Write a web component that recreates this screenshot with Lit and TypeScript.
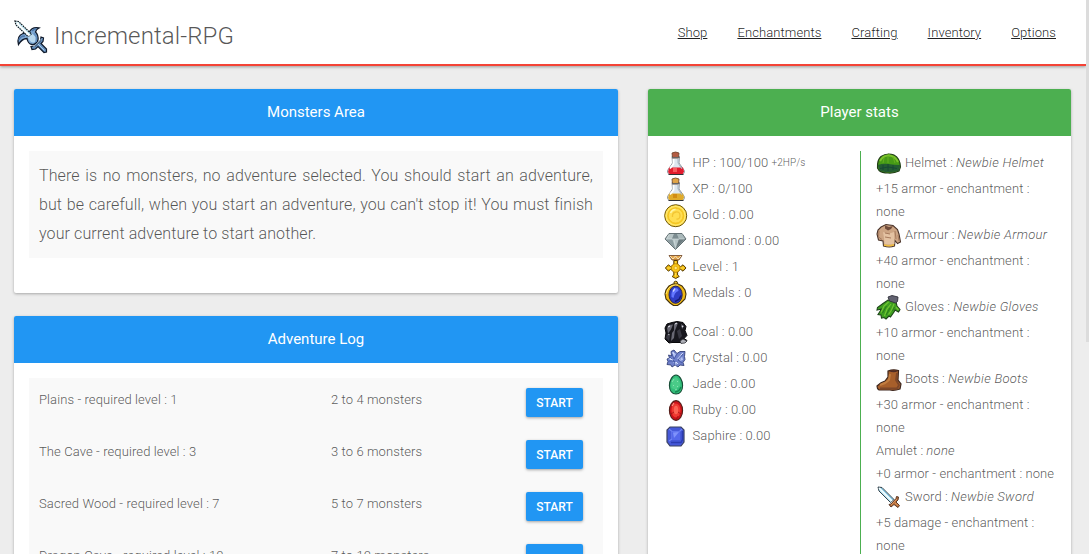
import { LitElement, html, svg, css } from "lit";
import { customElement } from "lit/decorators.js";

const frame = (body: unknown) => html`<svg class="icon" viewBox="0 0 26 26" aria-hidden="true">${body}</svg>`;

const potion = (liquid: string, light: string, cap: string) => svg`
  <path d="M8 6.5 8.500 13 3.500 20.500Q3 24.500 7 24.500h10q4 0 3.300-4L15 13l.5-6.500z" fill="#dde7ef" stroke="#7b848d" stroke-width=".8"/>
  <path d="M5 17.500h14l1 4q-.5 2.700-3 2.700H7q-2.700 0-2.800-2.700z" fill="${liquid}"/>
  <path d="M9 18h4v4H9z" fill="${light}"/>
  <path d="M9.500 9v5L6 18.500" stroke="#fff" stroke-width="1.800" fill="none"/>
  <path d="M14 9v4l4 6" stroke="#a8b5c2" fill="none"/>
  <path d="M8 3q3.500-2 7 0l-.5 5H8.500z" fill="${cap}" stroke="#6b4028" stroke-width=".8"/>
  <path d="M8 7.500h7.500" stroke="#666" stroke-width="1.100"/>
  <path d="M4.500 24.500h15" stroke="#303338"/>`;

const icons: Record<string, unknown> = {
  hp: frame(potion("#e31c2e", "#f75a5e", "#b45c43")),
  xp: frame(potion("#e0ab2b", "#d18c13", "#e0a548")),
  gold: frame(svg`
    <circle cx="11.700" cy="13.700" r="11" fill="#f6cd22" stroke="#6b5510"/>
    <circle cx="11.700" cy="13.700" r="9.500" fill="none" stroke="#ffe66e" stroke-width="1.600"/>
    <circle cx="11.700" cy="13.700" r="7.400" fill="#ffdf52" stroke="#f0bd25" stroke-width=".8"/>
    <path d="M8.500 15q-.5-4.500 3.500-5t4 3.500-3.500 3.500" stroke="#f3c534" stroke-width="1.300" fill="none"/>
    <path d="M6.500 11q2-4 5-3.500" stroke="#fff6a5" stroke-width="1.500" fill="none"/>`),
  diamond: frame(svg`
    <path d="M5 5.500h13l4 5.500L11.500 21.500 1 11z" fill="#94a3a6" stroke="#59676a" stroke-width=".9"/>
    <path d="m5 6-3 5h6l2-5z" fill="#b7c4c5"/><path d="M10 6 8 11h7l-2-5z" fill="#7c8c90"/>
    <path d="m13 6 2 5h6l-3-5z" fill="#a9b8ba"/><path d="m8 11 3.500 10L15 11z" fill="#b4c2c4"/>
    <path d="m2 11 9 9-3-9z" fill="#8d9da1"/><path d="m15 11-3 9 9-9z" fill="#6c7b7f"/>
    <path d="m5 7-2 3.500M10 12l1.500 7M2 11h18" stroke="#dce6e5" stroke-width=".6" fill="none"/>`),
  level: frame(svg`
    <path d="M5 1.500h13l-3 4.500H8z" fill="#e5a54a" stroke="#6c4225" stroke-width=".8"/>
    <path d="m6 2 3 3 2.500-3L14 5l3-3" fill="none" stroke="#f7e3bd" stroke-width="1"/>
    <path d="M9.800 6.500h3.800v3.700l3 2.500 2.400-1.900 3 3.200-3 3.200-2.400-1.900-3 2.700v3l1.700 1.500-3.600 2-3.600-2 1.700-1.500v-3l-3-2.700-2.400 1.900-3-3.200 3-3.200 2.400 1.900 3-2.500z" fill="#efb90b" stroke="#553a03" stroke-width="1"/>
    <path d="M11.700 7.500v15M3 14h17" stroke="#ffe05a" stroke-width="1"/>
    <circle cx="11.700" cy="14" r="4.300" fill="#f8c719" stroke="#bd870b"/>
    <circle cx="11.700" cy="14" r="1.700" fill="#ffed83" stroke="#de9b0a" stroke-width=".7"/>`),
  medals: frame(svg`
    <circle cx="11.700" cy="3" r="1.800" fill="#edbf34" stroke="#4b3705"/>
    <path d="M5 6 9 4h5l4 2 3 4 1 4-1 5-4 4-3.500 2.500h-4L6 23l-4-4-1-5 1-4z" fill="#eeb814" stroke="#443109" stroke-width="1.100"/>
    <path d="m2 14 2-5 3-3 4-1h3" stroke="#ffe66b" fill="none"/>
    <ellipse cx="11.600" cy="14.700" rx="6.600" ry="8.600" fill="#2f3dc4" stroke="#2a2553"/>
    <path d="M7.500 17q-1-6 4-9 3 0 3 3-4 1-5 7z" fill="#6377ff"/><path d="m9 11.500 2-3" stroke="#cbd3ff" stroke-width="1.400"/>
    <path d="m11 21.500 4-2 2-4" stroke="#151a72" stroke-width="1.500" fill="none"/>`),
  coal: frame(svg`
    <path d="M3 5 8 3.500 13 2.500l6 1 3 4-1 4 2 5-3 3 3 2-2 2H8l-3 .5-4-4 1-6-1-5z" fill="#17171d" stroke="#08080b"/>
    <path d="m3 9 2-3 4-.5-2 5-3 4zM10 5l4-1-2 5-2 5zM17 5l3 2-2 3zM8 14l3-4-1 9-3 3z" fill="#686873"/>
    <path d="m4 8 2-1M11 5l2-1M5 15l-1 4M15 13l1 5M18 7l1 1" stroke="#d9dae2" stroke-width="1.100"/>
    <path d="m13 12 3-2 2 7-3 3zM3 15l3 2-1 5-3-3z" fill="#383842"/>
    <path d="m16 22 3-2 4 2-2 2-4 .5z" fill="#aeb0b8" stroke="#24242a" stroke-width=".7"/>`),
  crystal: frame(svg`
    <path d="m7 6.500 3-1.500 3 3.500 3-2 5 0-.5 5 .5 3-2 3 1 3-4-.5-2 2-3-2-3 2-1-2-4-.5 1-3-1-2.500 2.500-1-1-3 3 1z" fill="#6f80ca" stroke="#34427a" stroke-width=".9"/>
    <path d="m8 7 2 6 2-4zM18 8l-5 6 3 1zM4 14l6 2-3-3.500zM18 11l-2 5 3-1zM9 17l3 4 1-4z" fill="#b6c4f3"/>
    <path d="m8 9 2 5 3-5m6 0-5 6 4 3M5 16h5l1 4M6 12l5 5" stroke="#4659a5" stroke-width=".9" fill="none"/>
    <path d="m9 7 1 2m9-1-2 2M6 14l3 1m3 2 2 2" stroke="#e5edff" stroke-width=".8"/>`),
  jade: frame(svg`
    <path d="M12 4c3.500 0 6.600 5.500 6.600 10.500S16 23 12 23s-6.600-3.500-6.600-8.500S8.500 4 12 4z" fill="#31bd79" stroke="#174b35" stroke-width="1.100"/>
    <path d="M7.500 17Q6 8 12 6q5 4 4 9-4 5-8.500 2" fill="#4acb88"/>
    <path d="m8 11 2-3m3 2 1 1m-5 3 1 1m3 0 1 1m-3 3 2-1" stroke="#8de5b4" stroke-width=".9"/>
    <path d="M17 16q-2 5-6 5" stroke="#168451" stroke-width="1.300" fill="none"/>`),
  ruby: frame(svg`
    <ellipse cx="12" cy="13.500" rx="6.600" ry="9.900" fill="#cb1219" stroke="#531e19" stroke-width="1.100"/>
    <ellipse cx="12" cy="13.500" rx="4.500" ry="7" fill="#ef3931"/>
    <ellipse cx="12" cy="13" rx="2.200" ry="4.300" fill="#fb6454"/>
    <path d="m7 9 3-4m-3 12 3-2m4 0 3 2m-3 2-2 4" stroke="#9b1413" stroke-width=".8"/>
    <path d="m8 9 2-3" stroke="#ff9a88" stroke-width="1.200"/>`),
  saphire: frame(svg`
    <path d="M6 4h11l3 3v12l-3 4H6l-3-4V7z" fill="#4659d8" stroke="#3b4262" stroke-width="1.200"/>
    <path d="m5 6 3 2.500h7.500L18 6M5 18l3-2V9" stroke="#7185f5" stroke-width="1.100" fill="none"/>
    <path d="M8 8.500h8V17H8z" fill="#5468eb"/><path d="m9 9.500 6-.5-5 6z" fill="#7f92fb"/>
    <path d="M7 19.500h10l1.500-3V8" stroke="#2b3cb2" stroke-width="1.500" fill="none"/>`),
  helmet: frame(svg`
    <path d="M1.500 18Q1 10 5 6.500q6-4 13-1.500 6 3 6.500 12l-1.500 4q-5 2.500-11 2-6 0-9-2.500z" fill="#469a16" stroke="#213d16" stroke-width="1.100"/>
    <path d="M1.700 15q6-2 11-1t11.500 1l-1 5.500q-5 2-11 1.500-6 0-9-2z" fill="#235c32"/>
    <path d="M4 11q3-5.500 8-5.500 7 0 10 6.500" stroke="#7bc22a" stroke-width="2" fill="none"/>
    <path d="m8 8-1 5m5-7v7m5-6 2 6m-7-9 2 1" stroke="#63ac21" stroke-width="1.100"/>
    <path d="M4 18.500q8-3 17 0M7 15v5m5-6v7m5-6v5" stroke="#174537" stroke-width=".9" fill="none"/>`),
  armour: frame(svg`
    <path d="m5 5 5-2.500 7 1 4.500 4L23 12l1.500 8-3 1.500-2.500-3-.5 5.500q-5 2-11 0L7 19l-4.500-1L1 12l1-4z" fill="#cda584" stroke="#4a342a" stroke-width="1.100"/>
    <path d="m9 3.500 4 1.500 4-1-2 3-3 1.500-3-2z" fill="#704c3b"/>
    <path d="m7 10 5 2 6-2 .5 12q-5 1-10 0L8 16z" fill="#e4c2a2"/>
    <path d="M3 9 2.500 15 6 17.500M19 9l1 8m2-4 1 6M9 11l5 1m-5 3 6 1" stroke="#a77b5e" fill="none"/>
    <path d="M8 23q5 1.500 10-.2" stroke="#f0bd3e" stroke-width="1.600" fill="none"/>`),
  gloves: frame(svg`
    <path d="m12 6 8 2 1 4 3 3.500-1.500 2.500-3.500-2-1 2-3.500 5-1.500-1-3 3-2-1.500-2.500.5-.5-3-3-.5 3.500-5.500-4.500 1 .5-2.500 5.500-4z" fill="#3e9f20" stroke="#1d4518" stroke-width="1.100"/>
    <path d="m12 3 4-1.500 6 1.500-.5 4.500-2 1.500-6-2z" fill="#626271" stroke="#30303a" stroke-width=".9"/>
    <path d="M12.500 8 8 12l-3 6.500M15 10l-4 5-2.500 7M18 10l-2.500 6-3 4.500M20 13l2.500 3" stroke="#72c534" stroke-width="1.200" fill="none"/>
    <path d="m10.500 12-4 7m7.500-5-4 7m8.500-8-2 4" stroke="#27771c" stroke-width=".9" fill="none"/>`),
  boots: frame(svg`
    <path d="M12 5q5-2 10.500-.5l-.5 9.500 3 4-1 5q-6 2-10 1H3q-2-1-2-4 4-4 8-5l3-4z" fill="#a75f2b" stroke="#3c251c" stroke-width="1.200"/>
    <path d="M12.500 5q5-1.500 9.500 0-4 2.500-9.500 0" fill="#4f2b23"/>
    <path d="m14 8-1 6-4 3-5 2" stroke="#c27d40" stroke-width="2" fill="none"/>
    <path d="m21 7-1 7 3 5-2 3.500H4" stroke="#7d4729" stroke-width="1.800" fill="none"/>`),
  sword: frame(svg`
    <path d="m2 3 4 .5 12 12-3.500 3L3 7z" fill="#b8e1f2" stroke="#35444d" stroke-width="1"/>
    <path d="M3 4 16 17" stroke="#f5ffff" stroke-width="1.600"/><path d="m5 4 12 12" stroke="#6ab6d9" stroke-width=".8"/>
    <path d="m13 20.500 2-.5 5-5.500.5-2 2 .5-.5 3-2 2 3.500 3.500-1.500 2-4-3-3 2.500z" fill="#bb7039" stroke="#5b3827" stroke-width="1"/>
    <path d="m15 21 6-6m-2 4 3 2.500" stroke="#dc9962" stroke-width=".9"/>`),
};

const logo = html`<svg class="logo" viewBox="0 0 34 34" aria-hidden="true">
  <path d="M4.500 24.500Q2.500 16 9 13.500l6-1Q18 6.500 25 8q-3 1.500-3.500 4 3 3 2.500 8-2 5-6 4.500-4-.5-5-6-5 0-8.500 6z" fill="#7fa9d4" stroke="#101a2b" stroke-width="1.300"/>
  <path d="M5 20q1-4 6-4M18 11q2-2 4-2" fill="none" stroke="#4d78ac" stroke-width="1.500"/>
  <ellipse cx="18" cy="18" rx="3.300" ry="4.800" transform="rotate(-35 18 18)" fill="#b9d8ee"/>
  <path d="m20 13 2.500 4-.5 5" fill="none" stroke="#6390c2" stroke-width="1.500"/>
  <path d="m1 1 3.500.5L17.500 14 14 16.500 2 5z" fill="#d6f2f7" stroke="#111820" stroke-width="1.200" stroke-dasharray="1.600 .8"/>
  <path d="m3 3 12.500 12.500" stroke="#fff" stroke-width="2"/><path d="m5 3.500 12 11.500" stroke="#8cc9df" stroke-width=".8"/>
  <path d="m17 26.500 4-.5 5.500-5.500.5-3.500 2.500 1-.5 3.500-2 2 5.500 5.500v3l-2.500.5-6-6-2.500 2.500-3.500.5z" fill="#648fbe" stroke="#101a2b" stroke-width="1.200"/>
  <path d="m19.500 27 8.500-8.500m-4 5.500 6.500 6.500" stroke="#a9cdec" stroke-width="1"/></svg>`;

const vitals = [
  ["hp", "HP : 100/100", "+2HP/s"], ["xp", "XP : 0/100"], ["gold", "Gold : 0.00"],
  ["diamond", "Diamond : 0.00"], ["level", "Level : 1"], ["medals", "Medals : 0"],
];
const minerals = [
  ["coal", "Coal : 0.00"], ["crystal", "Crystal : 0.00"], ["jade", "Jade : 0.00"],
  ["ruby", "Ruby : 0.00"], ["saphire", "Saphire : 0.00"],
];
const gear = [
  ["helmet", "Helmet", "Newbie Helmet", "+15 armor - enchantment : none"],
  ["armour", "Armour", "Newbie Armour", "+40 armor - enchantment : none"],
  ["gloves", "Gloves", "Newbie Gloves", "+10 armor - enchantment : none"],
  ["boots", "Boots", "Newbie Boots", "+30 armor - enchantment : none"],
  ["", "Amulet", "none", "+0 armor - enchantment : none"],
  ["sword", "Sword", "Newbie Sword", "+5 damage - enchantment : none"],
];
const adventures = [
  ["Plains - required level : 1", "2 to 4 monsters"],
  ["The Cave - required level : 3", "3 to 6 monsters"],
  ["Sacred Wood - required level : 7", "5 to 7 monsters"],
  ["Dragon Cave - required level : 10", "7 to 10 monsters"],
];

@customElement("app-root")
export class AppRoot extends LitElement {
  static styles = css`
    :host { display: block; height: 554px; overflow: hidden; background: #ededed; color: rgba(0,0,0,.67);
      font: 300 13px/23px Roboto, "Liberation Sans", sans-serif; letter-spacing: .1px; }
    * { box-sizing: border-box; }
    .shell { display: grid; grid-template-columns: 1fr 3px; height: 554px; }
    .page { min-width: 0; height: 554px; overflow: hidden; }
    .thumb { height: 342px; background: #dcdcdc; }
    header { display: flex; align-items: center; justify-content: space-between; height: 66px;
      padding: 2px 15px 0 14px; background: #fff; border-bottom: 2px solid #f44336; box-shadow: 0 1px 3px rgba(0,0,0,.35); }
    .brand { display: flex; align-items: center; height: 100%; padding-top: 8px; }
    .logo { width: 34px; height: 34px; margin-right: 6px; }
    .title { font-size: 24px; line-height: 30px; padding-bottom: 3px; letter-spacing: .1px; }
    nav { display: flex; padding-bottom: 1px; }
    nav a { padding: 0 15px; color: rgba(0,0,0,.87); text-decoration: underline; }
    main { display: grid; grid-template-columns: 604px 423px; justify-content: space-between; align-items: start;
      padding: 23px 15px 0 14px; }
    .left { display: grid; gap: 23px; }
    .card { background: #fff; border-radius: 2px; box-shadow: 0 1px 3px rgba(0,0,0,.3); }
    .head { height: 47px; border-radius: 2px 2px 0 0; background: #2196f3; color: #fff; text-align: center;
      font-size: 15px; line-height: 46px; font-weight: 400; letter-spacing: 0; }
    .green { background: #4caf50; }
    .area { height: 204px; }
    .body { padding: 15px; }
    .notice { padding: 10px; height: 107px; background: #f9f9f9; font-size: 16px; line-height: 29px; text-align: justify; }
    .log { padding: 10px; background: #f9f9f9; }
    .row { display: grid; grid-template-columns: 292px 195px 57px; height: 52px; align-items: start; }
    button { height: 29px; padding: 1px 0 0; border: 0; border-radius: 2px; background: #2196f3; color: #fff;
      font: 500 12px/28px Roboto, sans-serif; letter-spacing: 0; box-shadow: 0 1px 3px rgba(0,0,0,.35); }
    .stats { display: grid; grid-template-columns: 196px 1fr; height: 560px; padding: 15px 15px 0 16px; }
    .goods { margin-top: -1px; }
    .line { display: flex; align-items: center; height: 26px; white-space: nowrap; }
    .line span, .line em, .line small { padding-bottom: 2px; }
    .icon { flex: none; width: 26px; height: 26px; margin-right: 2.500px; }
    .gear .icon { margin-right: 3px; }
    small { font-size: 10px; margin-left: 3px; }
    .minerals { margin-top: 13px; }
    .gear { border-left: 1px solid #4caf50; padding-left: 15px; }
    .gear-list { margin-top: -1px; }
    .plain { height: 23px; }
    .plain span, .plain em { padding-bottom: 0; }
    .effect { padding-top: 1px; height: 46px; }
    .short { height: 23px; padding-top: 1px; white-space: nowrap; }
    .plain { padding-top: 1px; }
    em { margin-left: 3px; letter-spacing: .28px; }
  `;

  private stat(item: string[]) {
    return html`<div class="line">${icons[item[0]]}<span>${item[1]}</span>${item[2] ? html`<small>${item[2]}</small>` : ""}</div>`;
  }

  render() {
    return html`<div class="shell"><div class="page">
      <header><div class="brand">${logo}<span class="title">Incremental-RPG</span></div>
        <nav>${["Shop", "Enchantments", "Crafting", "Inventory", "Options"].map(n => html`<a>${n}</a>`)}</nav></header>
      <main>
        <div class="left">
          <section class="card area"><div class="head">Monsters Area</div><div class="body"><div class="notice">There is no monsters, no adventure selected. You should start an adventure, but be carefull, when you start an adventure, you can't stop it! You must finish your current adventure to start another.</div></div></section>
          <section class="card"><div class="head">Adventure Log</div><div class="body"><div class="log">
            ${adventures.map(a => html`<div class="row"><span>${a[0]}</span><span>${a[1]}</span><button>START</button></div>`)}
          </div></div></section>
        </div>
        <section class="card"><div class="head green">Player stats</div><div class="stats">
          <div class="goods">${vitals.map(v => this.stat(v))}<div class="minerals">${minerals.map(v => this.stat(v))}</div></div>
          <div class="gear"><div class="gear-list">${gear.map(g => html`
            <div class="line ${g[0] ? "" : "plain"}">${g[0] ? icons[g[0]] : ""}<span>${g[1]} :</span><em>${g[2]}</em></div>
            <div class="${g[0] ? "effect" : "short"}">${g[3]}</div>`)}</div></div>
        </div></section>
      </main></div><div class="thumb"></div></div>`;
  }
}
